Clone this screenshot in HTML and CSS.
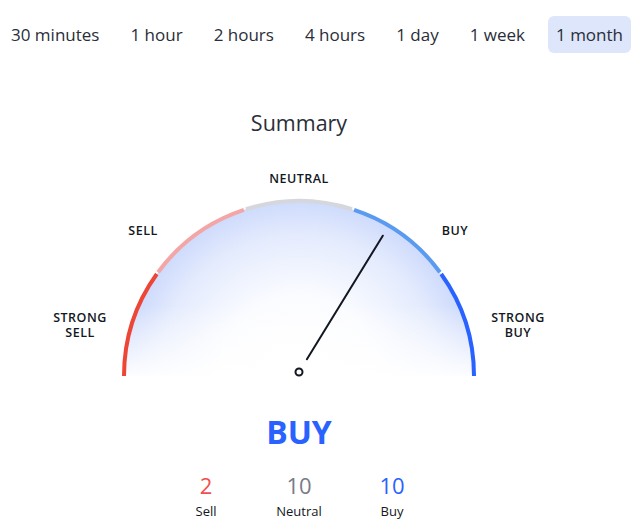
FILE: index.html
```html
<!DOCTYPE html>
<html>
<head>
<meta charset="utf-8">
<link rel="stylesheet" href="styles.css">
</head>
<body>
<div class="tabs">
  <div class="tab">30 minutes</div>
  <div class="tab">1 hour</div>
  <div class="tab">2 hours</div>
  <div class="tab">4 hours</div>
  <div class="tab">1 day</div>
  <div class="tab">1 week</div>
  <div class="tab active">1 month</div>
</div>
<div class="widget">
  <div class="title">Summary</div>
  <div class="gauge">
    <svg width="598" height="250" viewBox="0 138 598 250" xmlns="http://www.w3.org/2000/svg">
      <defs>
        <radialGradient id="fillGrad" gradientUnits="userSpaceOnUse" cx="299" cy="376" r="176">
          <stop offset="0" stop-color="#ffffff"/>
          <stop offset="0.45" stop-color="#fbfcff"/>
          <stop offset="0.8" stop-color="#e4ebfd"/>
          <stop offset="1" stop-color="#cddafc"/>
        </radialGradient>
        <linearGradient id="fadeGrad" gradientUnits="userSpaceOnUse" x1="0" y1="305" x2="0" y2="376">
          <stop offset="0" stop-color="#ffffff" stop-opacity="0"/>
          <stop offset="1" stop-color="#ffffff" stop-opacity="0.95"/>
        </linearGradient>
      </defs>
      <path d="M124,376 A175,175 0 0 1 474,376 Z" fill="url(#fillGrad)"/>
      <path d="M124,376 A175,175 0 0 1 474,376 Z" fill="url(#fadeGrad)"/>
      <g fill="none" stroke-width="4">
        <path d="M124,376 A175,175 0 0 1 156.8,274" stroke="#ee4636"/>
        <path d="M158.05,272.27 A175,175 0 0 1 243.91,209.9" stroke="#f3a6a5"/>
        <path d="M245.94,209.24 A175,175 0 0 1 352.06,209.24" stroke="#d5d7dc"/>
        <path d="M354.09,209.9 A175,175 0 0 1 439.95,272.27" stroke="#5a9bef"/>
        <path d="M441.2,274 A175,175 0 0 1 474,376" stroke="#2962ff"/>
      </g>
      <line x1="306.9" y1="359.2" x2="382.8" y2="235.7" stroke="#131722" stroke-width="2" stroke-linecap="round"/>
      <circle cx="299" cy="372" r="3.5" fill="#ffffff" stroke="#131722" stroke-width="2"/>
    </svg>
    <div class="glabel l-neutral">NEUTRAL</div>
    <div class="glabel l-sell">SELL</div>
    <div class="glabel l-buy">BUY</div>
    <div class="glabel l-ssell">STRONG<br>SELL</div>
    <div class="glabel l-sbuy">STRONG<br>BUY</div>
  </div>
  <div class="verdict">BUY</div>
  <div class="counts">
    <div class="count">
      <div class="num sell">2</div>
      <div class="lbl">Sell</div>
    </div>
    <div class="count">
      <div class="num neutral">10</div>
      <div class="lbl">Neutral</div>
    </div>
    <div class="count">
      <div class="num buy">10</div>
      <div class="lbl">Buy</div>
    </div>
  </div>
</div>
</body>
</html>
```

FILE: styles.css
```css
html, body {
  margin: 0;
  padding: 0;
  background: #ffffff;
}
body {
  width: 640px;
  height: 526px;
  overflow: hidden;
  font-family: "Open Sans", "Noto Sans", sans-serif;
  color: #131722;
}
.tabs {
  display: flex;
  gap: 15px;
  margin-top: 16px;
  padding-left: 3px;
  height: 37px;
}
.tab {
  display: flex;
  align-items: center;
  padding: 0 8px;
  font-size: 17px;
  color: #2a2e39;
  border-radius: 6px;
  white-space: nowrap;
}
.tab.active {
  background: #dde6fb;
}
.widget {
  width: 598px;
  display: flex;
  flex-direction: column;
  align-items: center;
}
.title {
  margin-top: 55px;
  font-size: 21.5px;
  line-height: 30px;
  height: 30px;
  color: #2a2e39;
}
.gauge {
  position: relative;
  width: 598px;
  height: 250px;
}
.gauge svg {
  display: block;
}
.glabel {
  position: absolute;
  transform: translateX(-50%);
  font-size: 12.5px;
  line-height: 15px;
  font-weight: 600;
  letter-spacing: 0.5px;
  color: #131722;
  text-align: center;
  white-space: nowrap;
}
.l-neutral { left: 299px; top: 32.6px; }
.l-sell { left: 143px; top: 84.6px; }
.l-buy { left: 455px; top: 84.6px; }
.l-ssell { left: 80px; top: 171.6px; }
.l-sbuy { left: 518px; top: 171.6px; }
.verdict {
  margin-top: 24px;
  font-size: 32px;
  line-height: 40px;
  font-weight: 700;
  color: #2962ff;
}
.counts {
  display: grid;
  grid-template-columns: repeat(3, 93px);
  margin-top: 19px;
}
.count {
  display: flex;
  flex-direction: column;
  align-items: center;
}
.num {
  font-size: 22px;
  line-height: 28px;
}
.num.sell { color: #f0504f; }
.num.neutral { color: #787b86; }
.num.buy { color: #2962ff; }
.lbl {
  margin-top: 3px;
  font-size: 13px;
  line-height: 18px;
  color: #131722;
}
```
